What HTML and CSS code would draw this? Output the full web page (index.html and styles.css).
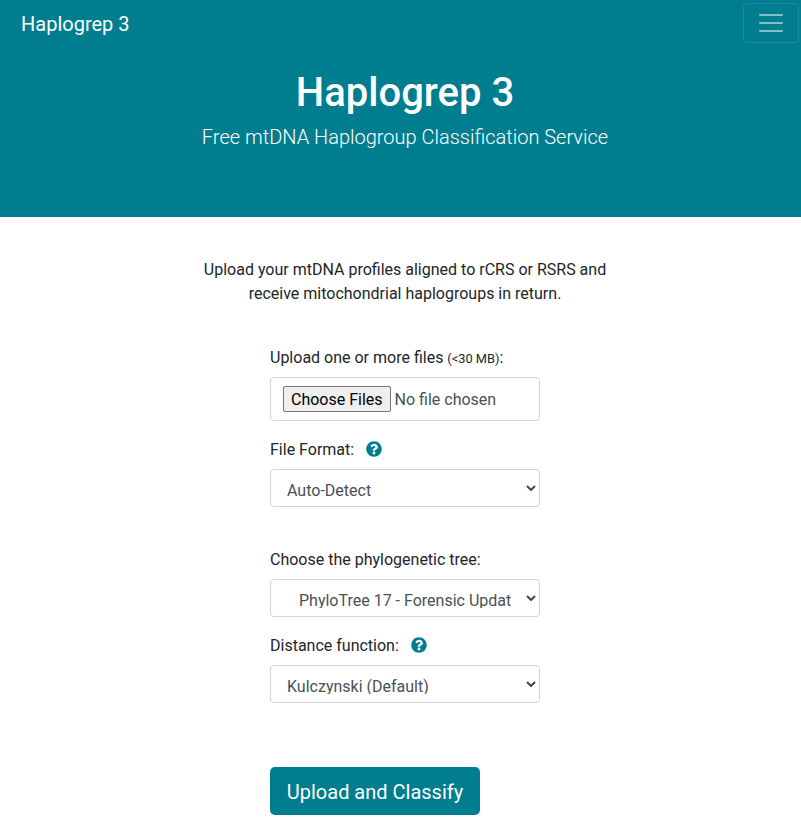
FILE: index.html
```html
<!DOCTYPE html>
<html lang="en">
<head>
<meta charset="utf-8">
<title>Haplogrep 3</title>
<link rel="stylesheet" href="styles.css">
</head>
<body>
<nav class="navbar">
  <a class="brand">Haplogrep 3</a>
  <button class="toggler" type="button" aria-label="Menu">
    <svg width="30" height="30" viewBox="0 0 30 30"><path stroke="rgba(255,255,255,.5)" stroke-width="2" stroke-linecap="round" stroke-miterlimit="10" d="M4 7h22M4 15h22M4 23h22"/></svg>
  </button>
</nav>
<header class="hero">
  <h1>Haplogrep 3</h1>
  <p>Free mtDNA Haplogroup Classification Service</p>
</header>
<main>
  <p class="intro">Upload your mtDNA profiles aligned to rCRS or RSRS and<br>receive mitochondrial haplogroups in return.</p>
  <form class="form">
    <div class="group">
      <label>Upload one or more files <small>(&lt;30 MB)</small>:</label>
      <div class="control file"><span class="choose">Choose Files</span><span class="chosen">No file chosen</span></div>
    </div>
    <div class="group format">
      <label>File Format: <svg class="help" viewBox="0 0 512 512"><path d="M504 256c0 136.997-111.043 248-248 248S8 392.997 8 256C8 119.083 119.043 8 256 8s248 111.083 248 248zM262.655 90c-54.497 0-89.255 22.957-116.549 63.758-3.536 5.286-2.353 12.415 2.715 16.258l34.699 26.31c5.205 3.947 12.621 3.008 16.665-2.122 17.864-22.658 30.113-35.797 57.303-35.797 20.429 0 45.698 13.148 45.698 32.958 0 14.976-12.363 22.667-32.534 33.976C247.128 238.528 216 254.941 216 296v4c0 6.627 5.373 12 12 12h56c6.627 0 12-5.373 12-12v-1.333c0-28.462 83.186-29.647 83.186-106.667 0-58.002-60.165-102-116.531-102zM256 338c-25.365 0-46 20.635-46 46 0 25.364 20.635 46 46 46s46-20.636 46-46c0-25.365-20.635-46-46-46z"/></svg></label>
      <div class="control select"><span>Auto-Detect</span><svg class="arrow" viewBox="0 0 10 6"><path d="M1 1l4 4 4-4"/></svg></div>
    </div>
    <div class="group">
      <label>Choose the phylogenetic tree:</label>
      <div class="control select tree"><span>PhyloTree 17 - Forensic Updat</span><svg class="arrow" viewBox="0 0 10 6"><path d="M1 1l4 4 4-4"/></svg></div>
    </div>
    <div class="group distance">
      <label>Distance function: <svg class="help" viewBox="0 0 512 512"><path d="M504 256c0 136.997-111.043 248-248 248S8 392.997 8 256C8 119.083 119.043 8 256 8s248 111.083 248 248zM262.655 90c-54.497 0-89.255 22.957-116.549 63.758-3.536 5.286-2.353 12.415 2.715 16.258l34.699 26.31c5.205 3.947 12.621 3.008 16.665-2.122 17.864-22.658 30.113-35.797 57.303-35.797 20.429 0 45.698 13.148 45.698 32.958 0 14.976-12.363 22.667-32.534 33.976C247.128 238.528 216 254.941 216 296v4c0 6.627 5.373 12 12 12h56c6.627 0 12-5.373 12-12v-1.333c0-28.462 83.186-29.647 83.186-106.667 0-58.002-60.165-102-116.531-102zM256 338c-25.365 0-46 20.635-46 46 0 25.364 20.635 46 46 46s46-20.636 46-46c0-25.365-20.635-46-46-46z"/></svg></label>
      <div class="control select"><span>Kulczynski (Default)</span><svg class="arrow" viewBox="0 0 10 6"><path d="M1 1l4 4 4-4"/></svg></div>
    </div>
    <button class="submit" type="button">Upload and Classify</button>
  </form>
</main>
</body>
</html>
```

FILE: styles.css
```css
* { box-sizing: border-box; }
body { margin: 0; font: 400 16px/24px Roboto, sans-serif; color: #212529; background: #fff; height: 828px; overflow: hidden; }
h1, p { margin: 0; }
.navbar { display: flex; align-items: center; justify-content: space-between; height: 46px; padding: 0 2px 0 21px; background: #007e8f; }
.brand { padding-top: 2px; font-size: 20px; line-height: 30px; color: #fff; }
.toggler { width: 56px; height: 40px; padding: 4px 12px; border: 1px solid rgba(255,255,255,.1); border-radius: 4px; background: none; }
.toggler svg { display: block; }
.hero { height: 171px; padding: 23px 0 0 9px; background: #007e8f; color: #fff; text-align: center; }
.hero h1 { font-size: 40px; line-height: 48px; font-weight: 500; }
.hero p { margin-top: 5px; font-size: 20px; line-height: 30px; font-weight: 300; }
.intro { padding: 41px 0 0 9px; text-align: center; }
.form { width: 270px; margin: 39px 0 0 270px; }
.group { margin-bottom: 16px; }
.format { margin-bottom: 40px; }
.distance { margin-bottom: 64px; }
label { display: block; padding-top: 1px; margin-bottom: 7px; }
small { font-size: 12.8px; line-height: 1; }
.help { width: 16px; height: 16px; margin-left: 7.8px; vertical-align: -2px; fill: #007e8f; }
.control { display: flex; align-items: center; height: 38px; border: 1px solid #d3d5d7; border-radius: 4px; color: #495057; white-space: nowrap; }
.file { height: 44px; padding-left: 12px; gap: 4px; }
.file span { line-height: 26px; }
.file .choose { height: 26px; padding: 0 7px; border: 1px solid #767676; border-radius: 2px; background: #efefef; color: #000; }
.file .chosen { padding-top: 2px; }
.select { justify-content: space-between; padding: 0 3px 0 16px; }
.select span { align-self: flex-start; height: 19px; margin-top: 9px; line-height: 24px; overflow: hidden; }
.tree { padding-left: 28px; }
.arrow { width: 10px; height: 6px; fill: none; stroke: #40464c; stroke-width: 2; }
.submit { display: block; width: 210px; height: 48px; padding: 2px 0 0; border: 0; border-radius: 5px; background: #007e8f; color: #fff; font: 400 20px/30px Roboto, sans-serif; }
```
